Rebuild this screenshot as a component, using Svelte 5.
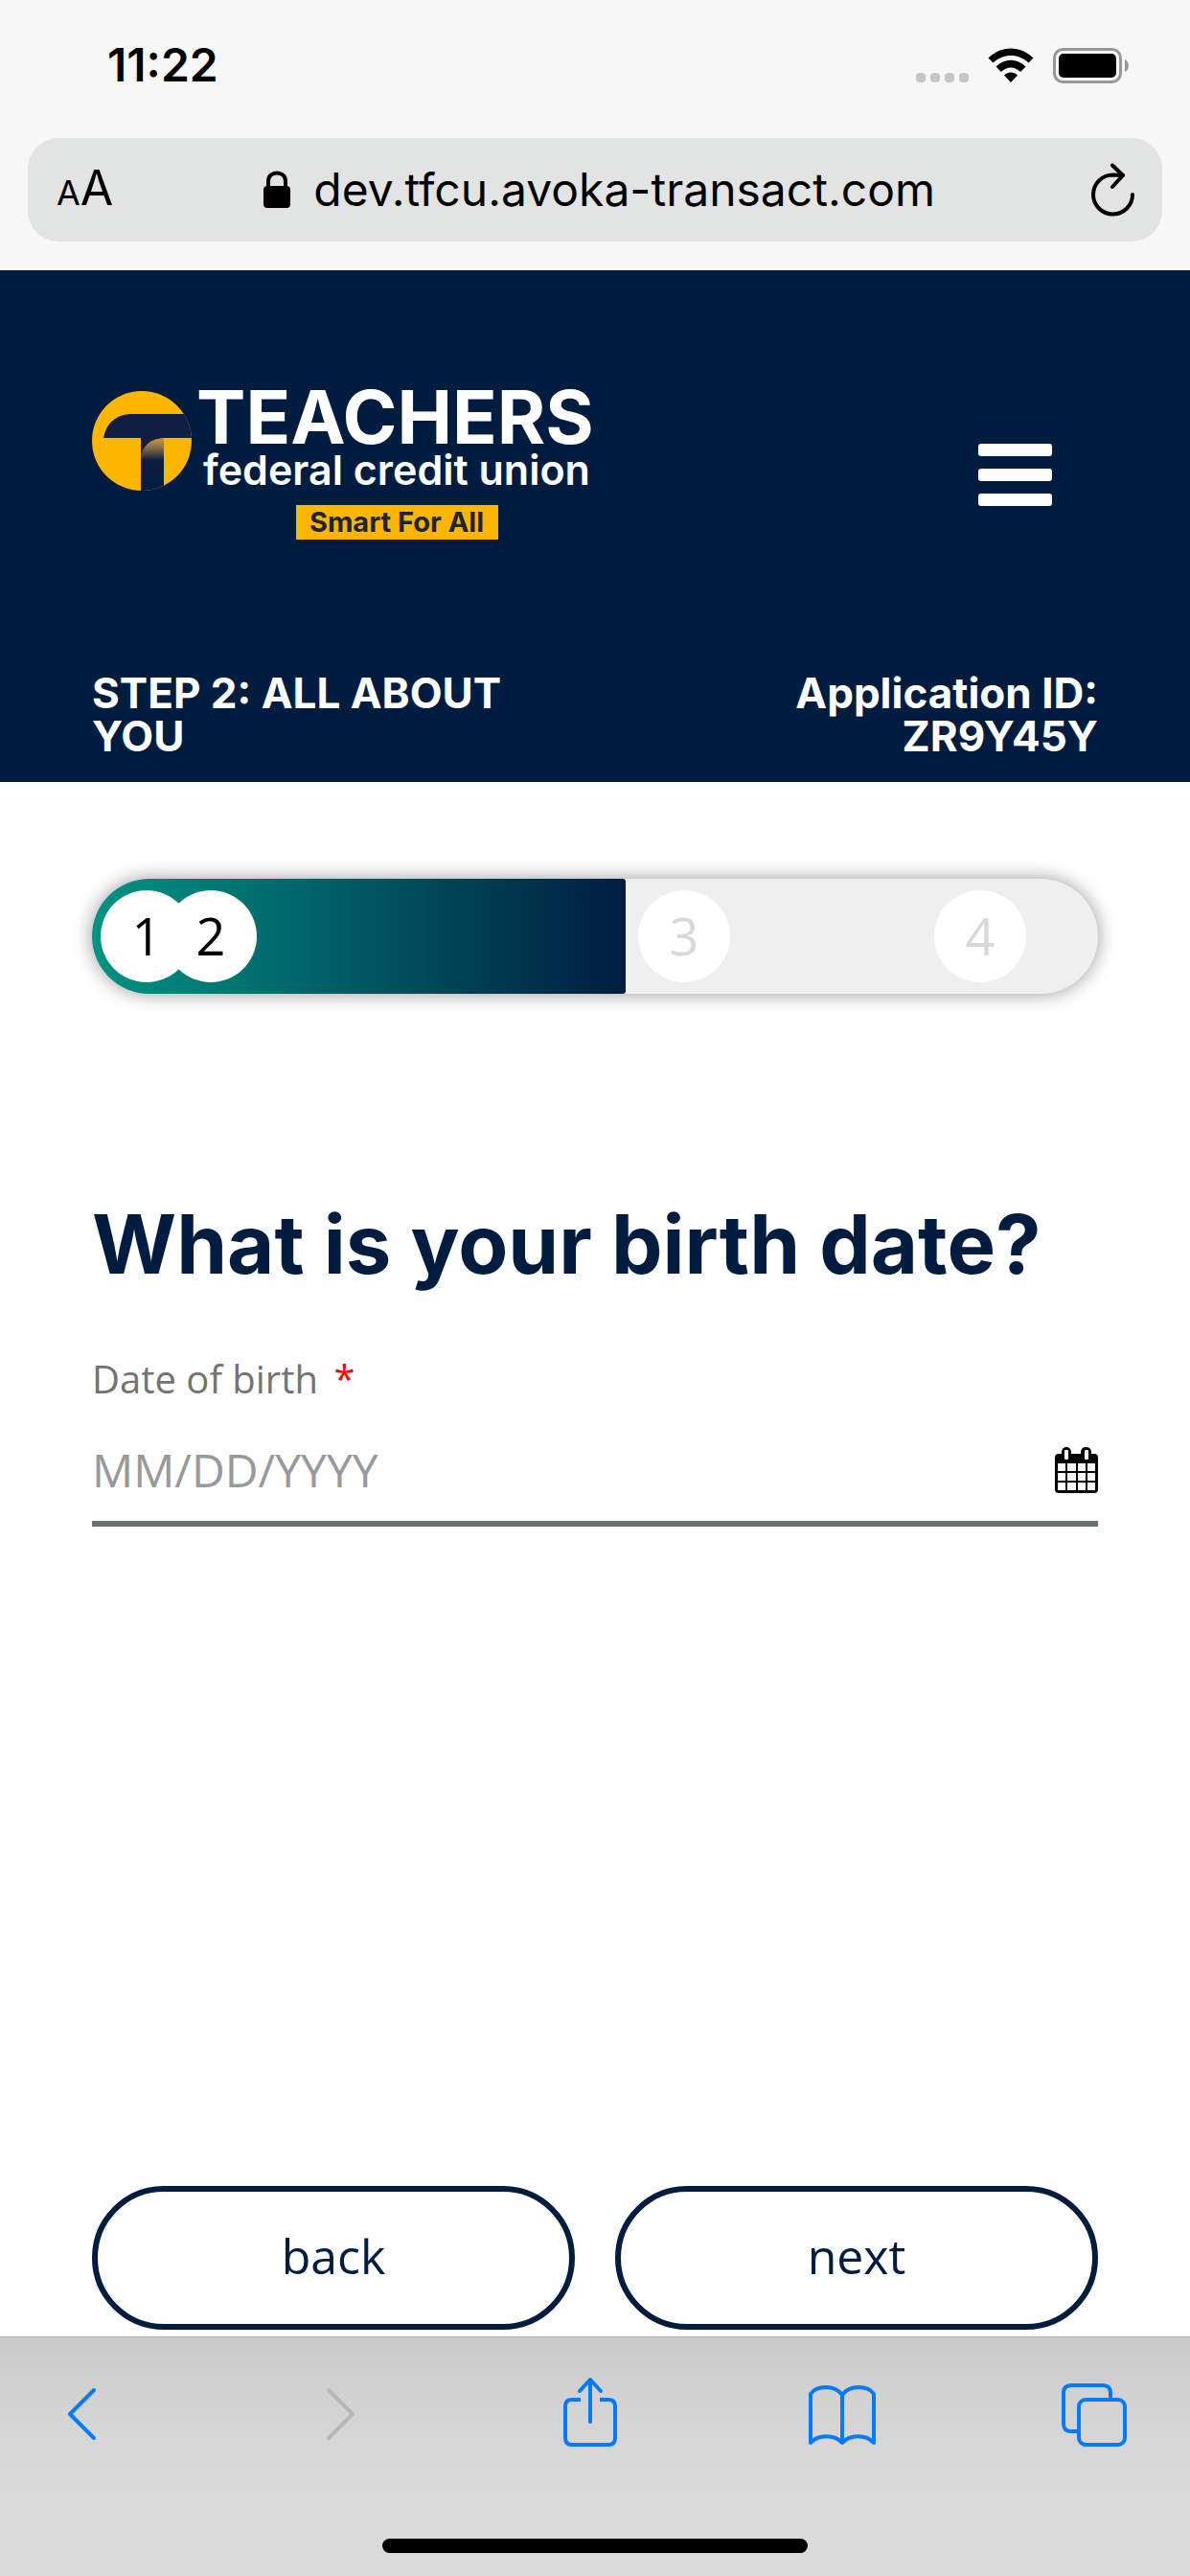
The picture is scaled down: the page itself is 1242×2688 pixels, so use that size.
<script>
  let birthDate = $state('');
  const progress = 53;
</script>

<div class="screen">
  <div class="browser-top">
    <div class="status">
      <time>11:22</time>
      <div class="signals">
        <svg class="dots" width="55" height="37" viewBox="0 0 55 37" aria-hidden="true">
          <g fill="#c6c6c6">
            <rect x="0" y="26" width="10" height="10" rx="4" />
            <rect x="15" y="26" width="10" height="10" rx="4" />
            <rect x="30" y="26" width="10" height="10" rx="4" />
            <rect x="45" y="26" width="10" height="10" rx="4" />
          </g>
        </svg>
        <svg class="wifi" width="48" height="37" viewBox="0 0 48 37" aria-hidden="true">
          <path d="M0.5 10.5 C14 -3 34 -3 47.500 10.500 L42.500 15.500 C32 5.500 16 5.500 5.500 15.500 Z" />
          <path d="M8.500 19.500 C17.500 10.500 30.500 10.500 39.500 19.500 L34 25 C28 19 20 19 14 25 Z" />
          <path d="M17 28.500 C21 24.500 27 24.500 31 28.500 L24 36 Z" />
        </svg>
        <svg width="79" height="37" viewBox="0 0 79 37" aria-hidden="true">
          <rect x="1.500" y="1.500" width="69" height="34" rx="9" fill="none" stroke="#979797" stroke-width="3" />
          <rect x="6" y="6" width="60" height="25" rx="5" />
          <path d="M75 12 C80 14 80 23 75 25 Z" fill="#979797" />
        </svg>
      </div>
    </div>
    <div class="address">
      <button class="text-size" aria-label="Text size"><span class="small-a">A</span><span class="big-a">A</span></button>
      <div class="url">
        <svg width="28" height="40" viewBox="0 0 28 40" aria-hidden="true">
          <path d="M5 18 V11 C5 -0.500 23 -0.500 23 11 V18" fill="none" stroke="#000" stroke-width="4" />
          <rect x="0" y="16" width="28" height="23" rx="4" />
        </svg>
        <span>dev.tfcu.avoka-transact.com</span>
      </div>
      <button class="reload" aria-label="Reload">
        <svg width="46" height="56" viewBox="0 0 46 56" fill="none" stroke="#000" stroke-width="4" stroke-linecap="round" stroke-linejoin="round" aria-hidden="true">
          <path d="M43 33 A20.500 20.500 0 1 1 22.500 12.500 L33 13" />
          <path d="M22 2.500 L33 13 L22 25" />
        </svg>
      </button>
    </div>
  </div>

  <header>
    <div class="brand-row">
      <a class="logo" href="/" aria-label="Teachers Federal Credit Union">
        <svg width="540" height="200" viewBox="0 -20 540 200">
          <defs>
            <clipPath id="disc"><circle cx="52" cy="53" r="52" /></clipPath>
            <linearGradient id="stem" x1="0" y1="0" x2="0" y2="1">
              <stop offset="0" stop-color="#c99332" />
              <stop offset="0.150" stop-color="#8a714a" />
              <stop offset="0.380" stop-color="#0b1e40" />
              <stop offset="1" stop-color="#001d40" />
            </linearGradient>
          </defs>
          <g clip-path="url(#disc)">
            <rect width="105" height="106" fill="#fdb600" />
            <path d="M12 50 C15 33 27 25 42 25 H105 V50 Z" fill="#0f1e41" />
            <path d="M51 110 V66 C52 54 64 50 75 51 V110 Z" fill="url(#stem)" />
            <path d="M51 50 H75 C60 51 53 58 51 70 Z" fill="#0f1e41" />
          </g>
          <text class="logo-name" x="109" y="56">TEACHERS</text>
          <text class="logo-sub" x="116" y="99">federal credit union</text>
          <rect x="213" y="120" width="211" height="36" fill="#fdb600" />
          <text class="logo-tag" x="318" y="148" text-anchor="middle">Smart For All</text>
        </svg>
      </a>
      <button class="menu" aria-label="Menu"><span></span><span></span><span></span></button>
    </div>
    <div class="step-row">
      <span class="step">STEP 2: ALL ABOUT YOU</span>
      <span class="app-id">Application ID: ZR9Y45Y</span>
    </div>
  </header>

  <main>
    <div class="progress" role="progressbar" aria-label="Application progress" aria-valuemin="0" aria-valuemax="100" aria-valuenow={progress}>
      <div class="fill" style="width: {progress}%"></div>
      <ol>
        <li class="one">1</li>
        <li class="two">2</li>
        <li class="three">3</li>
        <li class="four">4</li>
      </ol>
    </div>

    <h1>What is your birth date?</h1>

    <label for="dob">Date of birth <span class="required">*</span></label>
    <div class="field">
      <input id="dob" type="text" placeholder="MM/DD/YYYY" bind:value={birthDate} />
      <button class="calendar" aria-label="Choose date">
        <svg width="45" height="48" viewBox="0 0 45 48" aria-hidden="true">
          <rect x="0" y="7" width="45" height="41" rx="4" />
          <rect x="7" y="0" width="10" height="16" rx="5" />
          <rect x="27" y="0" width="11" height="16" rx="5" />
          <g fill="#fff">
            <rect x="10" y="3" width="4" height="10" rx="1" />
            <rect x="31" y="3" width="4" height="10" rx="1" />
            {#each [17, 27, 37] as y}
              <rect x="3" {y} width="8" height="8" />
              <rect x="13" {y} width="9" height="8" />
              <rect x="24" {y} width="8" height="8" />
              <rect x="34" {y} width="8" height="8" />
            {/each}
          </g>
        </svg>
      </button>
    </div>

    <div class="actions">
      <button>back</button>
      <button>next</button>
    </div>
  </main>

  <footer>
    <nav aria-label="Browser">
      <button aria-label="Back">
        <svg viewBox="0 0 80 80"><path d="M53 15 L28 40 L53 65" /></svg>
      </button>
      <button aria-label="Forward" disabled>
        <svg viewBox="0 0 80 80"><path d="M34 15 L59 40 L34 65" /></svg>
      </button>
      <button aria-label="Share">
        <svg viewBox="0 0 80 80">
          <path stroke-linecap="butt" d="M32 25 H23 Q16 25 16 32 V65 Q16 72 23 72 H61 Q68 72 68 65 V32 Q68 25 61 25 H52" />
          <path d="M42 48 V5 M31 16 L42 4 L53 16" />
        </svg>
      </button>
      <button aria-label="Bookmarks">
        <svg viewBox="0 0 80 80">
          <path d="M41 20 C33 9 14 10 8 19 V70 C16 61 33 61 41 70 C49 61 66 61 74 70 V19 C68 10 49 9 41 20 Z M41 20 V70" />
        </svg>
      </button>
      <button aria-label="Tabs">
        <svg viewBox="0 0 80 80">
          <path stroke-linecap="butt" d="M24 58 H16 Q8 58 8 50 V18 Q8 10 16 10 H49 Q57 10 57 18 V25" />
          <rect x="24" y="25" width="48" height="47" rx="7" />
        </svg>
      </button>
    </nav>
    <div class="home"></div>
  </footer>
</div>

<style>
  :global(body) {
    margin: 0;
    background: #fff;
  }
  .screen {
    min-height: 100vh;
    display: flex;
    flex-direction: column;
    font-family: 'Open Sans', 'Noto Sans', sans-serif;
    color: #000;
  }
  button {
    border: 0;
    padding: 0;
    background: none;
    font: inherit;
    color: inherit;
  }
  svg {
    display: block;
  }
  ol {
    list-style: none;
    margin: 0;
    padding: 0;
  }

  .browser-top {
    background: #f7f7f7;
    padding: 38px 29px 30px;
    font-family: Inter, sans-serif;
  }
  .status {
    display: flex;
    justify-content: space-between;
    align-items: center;
    height: 60px;
    padding: 0 35px 0 83px;
  }
  .status time {
    font-size: 48px;
    font-weight: 600;
    line-height: 60px;
  }
  .signals {
    display: flex;
    gap: 20px;
  }
  .address {
    margin-top: 46px;
    height: 108px;
    padding: 0 28px 0 30px;
    border-radius: 32px;
    background: #e2e4e3;
    display: flex;
    align-items: center;
    justify-content: space-between;
  }
  .text-size {
    display: flex;
    align-items: baseline;
    line-height: 64px;
  }
  .small-a {
    font-size: 36px;
  }
  .big-a {
    font-size: 50px;
  }
  .url {
    display: flex;
    align-items: center;
    gap: 24px;
    padding-right: 6px;
    font-size: 48px;
    line-height: 60px;
  }

  header {
    background: #001d40;
    color: #fff;
    padding: 105px 96px 25px;
  }
  .brand-row {
    display: flex;
    justify-content: space-between;
    align-items: center;
    padding-right: 48px;
  }
  .logo-name {
    font: 700 77px Inter, sans-serif;
    fill: #fff;
  }
  .logo-sub {
    font: 600 43px Inter, sans-serif;
    fill: #fff;
  }
  .logo-tag {
    font: 700 29px Inter, sans-serif;
    fill: #1d2433;
  }
  .menu {
    display: flex;
    flex-direction: column;
    gap: 13px;
    padding-top: 16px;
  }
  .menu span {
    width: 77px;
    height: 13px;
    border-radius: 3px;
    background: #fff;
  }
  .step-row {
    display: flex;
    justify-content: space-between;
    margin-top: 114px;
    font: 700 44px/45px Inter, sans-serif;
  }
  .step-row span {
    width: 45%;
  }
  .app-id {
    text-align: right;
    padding-left: 10%;
    box-sizing: border-box;
  }

  main {
    flex: 1;
    display: flex;
    flex-direction: column;
    padding: 101px 96px 7px;
  }
  .progress {
    position: relative;
    height: 120px;
    border-radius: 60px;
    background: #efefef;
    box-shadow: 0 0 20px rgba(0, 0, 0, 0.4);
    overflow: hidden;
  }
  .fill {
    height: 120px;
    border-radius: 0 3px 3px 0;
    background: linear-gradient(90deg, #009383, #001d40);
  }
  .progress li {
    position: absolute;
    top: 12px;
    width: 96px;
    height: 96px;
    border-radius: 50%;
    background: #fff;
    font-size: 54px;
    line-height: 94px;
    text-align: center;
  }
  .one {
    left: 9px;
  }
  .two {
    left: 76px;
  }
  .three {
    left: 570px;
    color: #d8d8d8;
  }
  .four {
    left: 879px;
    color: #d8d8d8;
  }
  h1 {
    margin: 212px 0 0;
    font: 700 85px/100px Inter, sans-serif;
    color: #001d40;
  }
  label {
    margin-top: 60px;
    font-size: 40px;
    line-height: 60px;
    color: #737370;
  }
  .required {
    margin-left: 6px;
    color: #f00;
  }
  .field {
    display: flex;
    align-items: center;
    margin-top: 18px;
    height: 94px;
    padding-bottom: 6px;
    border-bottom: 6px solid #667371;
  }
  input {
    flex: 1;
    min-width: 0;
    border: 0;
    padding: 0;
    outline: 0;
    background: none;
    font: 400 48px/60px 'Open Sans', sans-serif;
    color: #000;
  }
  input::placeholder {
    color: #999;
    opacity: 1;
  }
  .actions {
    display: grid;
    grid-template-columns: 1fr 1fr;
    gap: 42px;
    margin-top: auto;
  }
  .actions button {
    height: 150px;
    padding-bottom: 4px;
    border: 6px solid #001d40;
    border-radius: 75px;
    font-size: 50px;
    font-weight: 500;
    color: #001d40;
  }

  footer {
    box-sizing: border-box;
    height: 250px;
    border-top: 1px solid #b0b2b1;
    background: linear-gradient(#cacaca, #d2d2d2 25%, #dadada 60%, #dbdbdb);
    padding-top: 40px;
  }
  nav {
    display: flex;
    justify-content: space-between;
    padding: 0 60px 0 45px;
  }
  nav svg {
    width: 80px;
    height: 80px;
    fill: none;
    stroke: #007aff;
    stroke-width: 4;
    stroke-linecap: round;
    stroke-linejoin: round;
  }
  nav button:disabled svg {
    stroke: #b7b7b7;
  }
  .home {
    width: 444px;
    height: 15px;
    margin: 90px auto 0;
    border-radius: 8px;
    background: #000;
  }
</style>
